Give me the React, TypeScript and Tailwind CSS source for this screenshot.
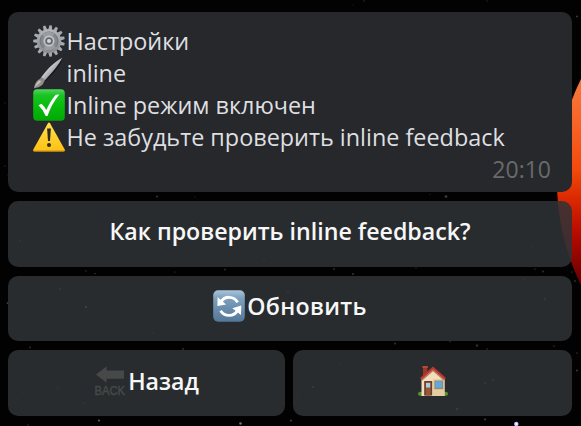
import type { ReactNode } from "react";

const stars: [number, number, number, number][] = [
  [157, 196.5, 1.2, 0.35], [195, 197, 0.8, 0.2], [430, 194.5, 0.8, 0.2], [446, 196.5, 1.6, 0.4],
  [60, 289, 1.2, 0.7], [86, 307, 1.4, 0.9], [32, 328, 1, 0.5], [82, 282, 0.8, 0.4], [126, 283, 0.8, 0.4],
  [20, 241, 1, 0.6], [62, 242, 0.8, 0.4], [29, 205, 0.8, 0.3], [193, 222, 1, 0.4], [153, 333, 1, 0.4],
  [7.5, 303, 1, 0.5], [86, 271, 1, 0.25], [95, 273.5, 1, 0.3], [175, 272, 1, 0.2], [225, 269.5, 1.1, 0.3],
  [334, 269, 1.1, 0.3], [353, 274, 1.2, 0.35], [264, 260, 1, 0.5], [288, 292, 1, 0.6], [316, 285, 0.9, 0.4],
  [30, 347.5, 1.1, 0.3], [183, 349, 1.2, 0.3], [58, 388, 1, 0.5], [84, 403, 1, 0.5], [23, 393, 0.8, 0.4],
  [99, 420.5, 1.3, 0.6], [28, 425, 1, 0.3], [240.5, 423.5, 1.5, 0.75], [291, 420.5, 1.3, 0.4],
  [313, 387, 1.3, 0.7], [297, 394, 0.8, 0.4], [395, 343.5, 1.3, 0.3], [450, 341.5, 1, 0.3],
  [477, 345.5, 1.4, 0.3], [487, 349, 1, 0.3], [554, 346, 1, 0.3], [577, 353, 1, 0.3], [577, 370.5, 1.1, 0.4],
  [493, 380, 1.2, 0.6], [485, 383, 1.2, 0.6], [457, 409, 1.5, 0.7], [485, 419.5, 1.3, 0.4],
  [545, 299, 1.4, 0.5], [524, 279, 1.2, 0.4], [493, 232, 0.9, 0.4], [533, 246, 1, 0.4], [456, 371, 0.8, 0.4],
  [416, 268, 1, 0.2], [535, 269, 1, 0.25], [543, 271.5, 1.2, 0.3], [572, 272, 1, 0.25], [575, 281, 1.1, 0.3],
  [577, 16.5, 1.3, 0.35], [487, 1, 1, 0.2], [364, 1, 1, 0.25], [353, 5, 0.8, 0.15], [5, 103, 1, 0.15],
  [5, 166, 1, 0.2], [8, 175, 1, 0.15], [127, 8, 0.7, 0.1], [387, 361, 0.8, 0.4], [340, 364, 0.8, 0.4],
];

function Backdrop() {
  return (
    <svg className="absolute inset-0" width="581" height="426" viewBox="0 0 581 426" aria-hidden="true">
      <defs>
        <linearGradient id="planet" x1="566" y1="75" x2="576" y2="285" gradientUnits="userSpaceOnUse">
          <stop offset="0" stopColor="#f87a3e" />
          <stop offset=".25" stopColor="#f66224" />
          <stop offset=".45" stopColor="#f34a0c" />
          <stop offset=".58" stopColor="#dc2b02" />
          <stop offset=".75" stopColor="#b90b00" />
          <stop offset="1" stopColor="#640000" />
        </linearGradient>
      </defs>
      {stars.map(([x, y, r, o]) => (
        <circle key={`${x}-${y}`} cx={x} cy={y} r={r * 0.85} fill="#c9cbd0" opacity={o * 0.75} />
      ))}
      <circle cx="516.3" cy="424" r="2.2" fill="#c8c0ff" />
      <circle cx="516.3" cy="424" r="1.1" fill="#fff" />
      <circle cx="790" cy="182" r="233" fill="url(#planet)" />
    </svg>
  );
}

const teeth = Array.from({ length: 15 }, (_, i) => i * 24);

function Gear() {
  return (
    <svg className="size-8 shrink-0" viewBox="0 0 32 32">
      <defs>
        <linearGradient id="steel" x1="0" y1="0" x2="0" y2="1">
          <stop offset="0" stopColor="#b3b7bc" />
          <stop offset="1" stopColor="#888c91" />
        </linearGradient>
      </defs>
      {teeth.map((a) => (
        <path key={a} d="M14 5 14.800.2h2.400L18 5z" fill="#a7abb0" transform={`rotate(${a + 6} 16 16)`} />
      ))}
      <circle cx="16" cy="16" r="12.100" fill="url(#steel)" />
      <circle cx="16" cy="16" r="9" fill="#85898e" stroke="#6d7176" strokeWidth=".9" />
      <path d="M16 16 9 9.800A9.300 9.300 0 0 1 21.500 8.500zM16 16l7 6.200A9.300 9.300 0 0 1 10.500 23.500z" fill="#999da2" />
      <circle cx="16" cy="16" r="4.700" fill="#656a70" stroke="#c2c6cb" strokeWidth="1.700" />
      <circle cx="16" cy="16" r="2" fill="#d0d4d8" />
    </svg>
  );
}

function Brush() {
  return (
    <svg className="size-8 shrink-0" viewBox="0 0 32 32">
      <defs>
        <linearGradient id="handle" x1="0" y1="0" x2="1" y2="1">
          <stop offset=".3" stopColor="#e2e5e8" />
          <stop offset=".55" stopColor="#a7acb2" />
          <stop offset=".8" stopColor="#2b2d30" />
        </linearGradient>
      </defs>
      <path d="M29.500.7C22 4 13.500 13 8 20.500l3.800 3.300C18 16.500 25 9 29.500.7z" fill="url(#handle)" />
      <path d="m11.800 23.800 1.200-1.500C20 15 26 8.500 29.500.7 30 6 20 17.500 12.500 24.500z" fill="#17191b" />
      <path d="M8 20.500c2 .3 3.300 1.600 3.800 3.300l-1.600 2-3.900-3.200z" fill="#8b8782" />
      <path d="M6.300 22.300C3.500 23.500 1.500 27.500 1 31.200c3.800-.5 8.400-2.200 9.500-5.200-.4-2-2-3.500-4.200-3.700z" fill="#96918c" />
      <path d="M2 30c1.500-4 3-5.500 4.500-6.500l1.500 1z" fill="#cdc9c4" />
    </svg>
  );
}

function Check() {
  return (
    <svg className="size-8 shrink-0" viewBox="0 0 32 32">
      <defs>
        <linearGradient id="green" x1="0" y1="0" x2="0" y2="1">
          <stop offset="0" stopColor="#58d461" />
          <stop offset=".18" stopColor="#1bc427" />
          <stop offset=".5" stopColor="#08bd0c" />
          <stop offset="1" stopColor="#00a806" />
        </linearGradient>
      </defs>
      <rect x=".2" y=".2" width="31.600" height="31.600" rx="4" fill="url(#green)" />
      <path d="m5.500 16.300 3-1.500q3 2.700 4.800 6.300Q17.500 11.500 22.800 5.700l3.500-.2Q18.500 15 14.500 27h-1.800Q10 20.500 5.500 16.300z" fill="#fff" />
    </svg>
  );
}

function Warning() {
  return (
    <svg className="size-8 shrink-0" viewBox="0 0 32 32">
      <defs>
        <linearGradient id="amber" x1="0" y1="0" x2="0" y2="1">
          <stop offset="0" stopColor="#ffe04b" />
          <stop offset="1" stopColor="#ffc012" />
        </linearGradient>
      </defs>
      <path d="M14.800 2.500q1.200-2 2.400 0l14.500 26q.7 2-1.200 2H1.500q-1.900 0-1.200-2z" fill="url(#amber)" />
      <path d="M1 29.600h30" stroke="#e4a51c" strokeWidth="1.200" />
      <path d="M14.100 7.500h3.800L17 20h-2z" fill="#2d2925" />
      <circle cx="16" cy="24" r="2" fill="#2d2925" />
    </svg>
  );
}

function Refresh() {
  return (
    <svg className="size-8 shrink-0" viewBox="0 0 32 32">
      <defs>
        <linearGradient id="blue" x1="0" y1="0" x2="0" y2="1">
          <stop offset="0" stopColor="#a9c5da" />
          <stop offset=".25" stopColor="#7da0bf" />
          <stop offset="1" stopColor="#557797" />
        </linearGradient>
      </defs>
      <rect x=".2" y=".2" width="31.600" height="31.600" rx="5" fill="url(#blue)" />
      <g fill="none" stroke="#fff" strokeWidth="2.800">
        <path d="M8 12C11.500 5.700 21 5.600 24.600 12.300" />
        <path d="M24.500 20.500C21 27 11.500 27 7.600 20.800" />
      </g>
      <path d="m4.600 7-.2 9 8.700-1.600zM28 25l.3-9.500-9 2.700z" fill="#fff" />
    </svg>
  );
}

function Back() {
  return (
    <span className="flex w-8 shrink-0 flex-col items-center text-[#474848]">
      <svg className="h-[17px] w-8" viewBox="0 0 32 17">
        <path d="M2 8.500 12.500.5v4H30v8.300H12.500v4z" fill="currentColor" />
      </svg>
      <span className="h-[13px] scale-x-[.86] font-['Liberation_Sans'] text-[13px] leading-[15px] font-normal [-webkit-text-stroke:0.5px]">
        BACK
      </span>
    </span>
  );
}

function House() {
  return (
    <svg className="size-8 shrink-0" viewBox="0 0 32 32">
      <ellipse cx="4" cy="28.700" rx="3" ry="2" fill="#5b9132" />
      <ellipse cx="28" cy="28.700" rx="3" ry="2" fill="#5b9132" />
      <path d="M6 1.700h4.300V9L6 13z" fill="#9f3429" />
      <path d="M5.500 1h5.300v2H5.500z" fill="#b94a3b" />
      <path d="M4.500 14 16 3.500 27.500 14v17h-23z" fill="#f0dfb9" />
      <path d="M16 14h11.500v17H16z" fill="#e4cda3" />
      <path d="M3 12.900 16 1.500l13 11.400-1.500 1.700L16 4.600 4.500 14.600z" fill="#c1352d" />
      <path d="m4.500 14.600 11.500-10 11.500 10-.8.900L16 6.300 5.300 15.500z" fill="#8e2d26" opacity=".6" />
      <path d="M7.200 16h8v14.500h-8z" fill="#693b28" />
      <path d="M8.700 17.200h5v13.300h-5z" fill="#95583d" />
      <path d="M9 18h4.200v4.500H9z" fill="#a8cee5" />
      <path d="M17.400 15.500h8.800v8.700h-8.800z" fill="#9a8770" />
      <path d="M18.400 16.500h6.800v6.300h-6.800z" fill="#61a8dc" />
    </svg>
  );
}

function Line({ icon, children }: { icon: ReactNode; children: ReactNode }) {
  return (
    <p className="flex h-8 items-center whitespace-nowrap">
      {icon}
      <span className="pl-[1.5px]">{children}</span>
    </p>
  );
}

function Key({ children }: { children: ReactNode }) {
  return (
    <button
      type="button"
      className="flex h-[65.7px] min-w-0 flex-1 items-center justify-center rounded-[10px] bg-[#2f3337]/86 pb-[5px] text-[23.2px] leading-8 font-semibold whitespace-nowrap text-[#f7f7f7]"
    >
      {children}
    </button>
  );
}

export default function App() {
  return (
    <main className="relative h-[426px] w-[581px] overflow-hidden bg-[#020202] font-['Open_Sans','Noto_Sans',sans-serif]">
      <Backdrop />
      <div className="relative flex flex-col gap-[9px] pt-3 pr-[9px] pl-2">
        <article className="h-[180px] rounded-[10px] bg-[#27282c] pt-[13px] pr-[21px] pl-[25px] text-[23.4px] leading-8 text-[#dedfe0]">
          <Line icon={<Gear />}>Настройки</Line>
          <Line icon={<Brush />}>inline</Line>
          <Line icon={<Check />}>Inline режим включен</Line>
          <Line icon={<Warning />}>Не забудьте проверить inline feedback</Line>
          <time className="block text-right text-[23px] text-[#686a6d]">20:10</time>
        </article>
        <div className="flex">
          <Key>Как проверить inline feedback?</Key>
        </div>
        <div className="flex">
          <Key>
            <Refresh />
            <span className="pl-[2px] tracking-[0.3px]">Обновить</span>
          </Key>
        </div>
        <div className="flex gap-[8px]">
          <div className="flex w-[277px]">
            <Key>
              <Back />
              <span className="pl-[2px]">Назад</span>
            </Key>
          </div>
          <Key>
            <House />
          </Key>
        </div>
      </div>
    </main>
  );
}
